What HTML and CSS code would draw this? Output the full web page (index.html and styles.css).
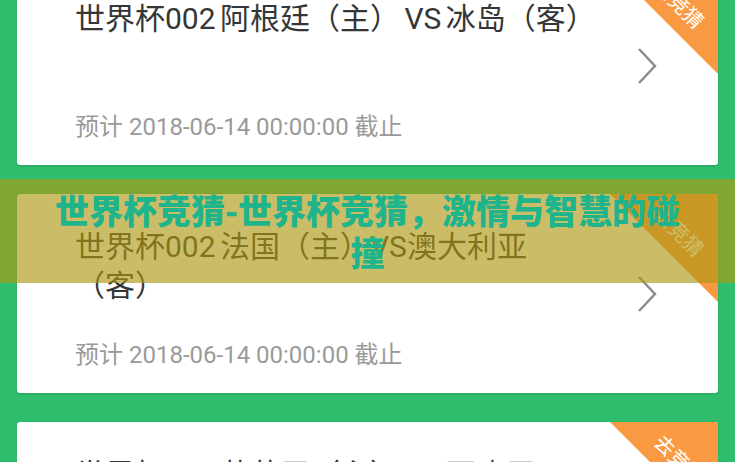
FILE: index.html
```html
<!DOCTYPE html>
<html lang="zh-CN">
<head>
    <meta charset="UTF-8">
    <meta name="viewport" content="width=device-width, initial-scale=1.0">
    <title>世界杯竞猜</title>
    <link rel="stylesheet" href="styles.css">
</head>
<body>
    <div class="list">
        <div class="card">
            <div class="info">
                <div class="title">世界杯002 阿根廷（主） VS 冰岛（客）</div>
                <div class="deadline">预计 2018-06-14 00:00:00 截止</div>
            </div>
            <svg class="arrow" viewBox="0 0 20 38"><polyline points="2,2 18,19 2,36" /></svg>
            <div class="ribbon"><span>去竞猜</span></div>
        </div>

        <div class="card">
            <div class="info">
                <div class="title">世界杯002 法国（主）VS澳大利亚（客）</div>
                <div class="deadline">预计 2018-06-14 00:00:00 截止</div>
            </div>
            <svg class="arrow" viewBox="0 0 20 38"><polyline points="2,2 18,19 2,36" /></svg>
            <div class="ribbon"><span>去竞猜</span></div>
        </div>

        <div class="card">
            <div class="info">
                <div class="title">世界杯002 葡萄牙（主） VS 西班牙（客）</div>
                <div class="deadline">预计 2018-06-15 00:00:00 截止</div>
            </div>
            <svg class="arrow" viewBox="0 0 20 38"><polyline points="2,2 18,19 2,36" /></svg>
            <div class="ribbon"><span>去竞猜</span></div>
        </div>
    </div>

    <div class="banner">世界杯竞猜-世界杯竞猜，激情与智慧的碰撞</div>
</body>
</html>
```

FILE: styles.css
```css
body {
    margin: 0;
    padding: 0;
    height: 462px;
    overflow: hidden;
    background-color: #2fbe6e;
    font-family: Roboto, "Noto Sans CJK SC", sans-serif;
}
.list {
    display: flex;
    flex-direction: column;
    gap: 29px;
    padding: 0 17px;
    margin-top: -34px;
}
.card {
    position: relative;
    display: flex;
    align-items: center;
    height: 199px;
    padding-left: 58px;
    background-color: #fff;
    border-radius: 3px;
    box-shadow: 0 1px 3px rgba(0, 0, 0, 0.15);
    overflow: hidden;
}
.info {
    flex: 1;
    align-self: stretch;
    display: flex;
    flex-direction: column;
    justify-content: space-between;
    padding: 33px 0 23px;
}
.title {
    font-size: 30px;
    line-height: 39px;
    word-spacing: -3px;
    color: #363636;
}
.deadline {
    font-size: 24px;
    line-height: 30px;
    color: #9a9a9a;
}
.arrow {
    width: 20px;
    height: 38px;
    margin: 0 61px 0 45px;
    flex-shrink: 0;
}
.arrow polyline {
    fill: none;
    stroke: #8c8c8c;
    stroke-width: 2.5;
}
.ribbon {
    position: absolute;
    top: 0;
    right: 0;
    width: 108px;
    height: 108px;
    background-color: #f99a43;
    clip-path: polygon(0 0, 100% 0, 100% 100%);
}
.ribbon span {
    position: absolute;
    left: 19px;
    top: 24px;
    width: 100px;
    line-height: 28px;
    font-size: 20px;
    color: #fff;
    text-align: center;
    transform: rotate(45deg);
}
.banner {
    position: absolute;
    top: 179px;
    left: 0;
    right: 0;
    padding: 10px 50px;
    font-family: "Noto Sans CJK SC", sans-serif;
    font-weight: 900;
    font-size: 34px;
    line-height: 42px;
    color: #20b48c;
    text-align: center;
    background-color: rgba(174, 152, 19, 0.64);
}
```
